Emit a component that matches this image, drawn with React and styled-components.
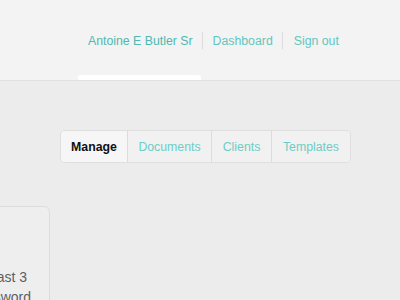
import React from "react";
import styled, { createGlobalStyle } from "styled-components";

const Global = createGlobalStyle`
  html, body {
    margin: 0;
    padding: 0;
    background: #ececec;
    font-family: "Liberation Sans", Arial, sans-serif;
    overflow: hidden;
  }
`;

const Header = styled.header`
  height: 80px;
  background: #f3f3f3;
  border-bottom: 1px solid #e1e1e1;
  display: flex;
  flex-direction: column;
  justify-content: space-between;
`;

const Nav = styled.nav`
  display: flex;
  align-items: center;
  padding: 32px 0 0 88px;
`;

const NavLink = styled.a`
  font-size: 12.3px;
  color: ${(p) => (p.$strong ? "#4fb8b0" : "#62c6bf")};
  text-decoration: none;
  line-height: 16px;
`;

const Divider = styled.span`
  width: 1px;
  height: 17px;
  background: #dcdcdc;
  margin: 0 ${(p) => p.$right}px 0 ${(p) => p.$left}px;
`;

const ActiveTab = styled.div`
  margin-left: 78px;
  width: 123px;
  height: 5px;
  background: #ffffff;
  border-radius: 2px 2px 0 0;
`;

const Toolbar = styled.div`
  display: flex;
  padding: 49px 0 0 60px;
`;

const Segmented = styled.div`
  display: flex;
  height: 31px;
  border: 1px solid #dedede;
  border-radius: 5px;
  background: #f1f1f1;
  overflow: hidden;
`;

const Segment = styled.button`
  width: ${(p) => p.$w}px;
  border: 0;
  border-left: ${(p) => (p.$first ? "0" : "1px solid #dcdcdc")};
  background: ${(p) => (p.$active ? "#f6f6f6" : "#f1f1f1")};
  font-family: inherit;
  font-size: 12.3px;
  font-weight: ${(p) => (p.$active ? 700 : 400)};
  color: ${(p) => (p.$active ? "#111" : "#6dcdc4")};
  padding: 0;
  cursor: pointer;
`;

const Card = styled.div`
  margin: 43px 0 0 -200px;
  width: 250px;
  height: 110px;
  border: 1px solid #dcdcdc;
  border-radius: 6px;
  background: #eeeeee;
  padding-top: 60px;
  box-sizing: border-box;
`;

const CardLine = styled.div`
  text-align: right;
  padding-right: ${(p) => p.$pad}px;
  font-size: 14px;
  line-height: 20px;
  color: #5f5f5f;
  white-space: nowrap;
`;

export default function App() {
  return (
    <>
      <Global />
      <Header>
        <Nav>
          <NavLink $strong>Antoine E Butler Sr</NavLink>
          <Divider $left={9} $right={10} />
          <NavLink>Dashboard</NavLink>
          <Divider $left={9} $right={11} />
          <NavLink>Sign out</NavLink>
        </Nav>
        <ActiveTab />
      </Header>
      <Toolbar>
        <Segmented>
          <Segment $first $active $w={66}>Manage</Segment>
          <Segment $w={84}>Documents</Segment>
          <Segment $w={60}>Clients</Segment>
          <Segment $w={79}>Templates</Segment>
        </Segmented>
      </Toolbar>
      <Card>
        <CardLine $pad={22}>must be at least 3</CardLine>
        <CardLine $pad={18}>characters in your password</CardLine>
      </Card>
    </>
  );
}
